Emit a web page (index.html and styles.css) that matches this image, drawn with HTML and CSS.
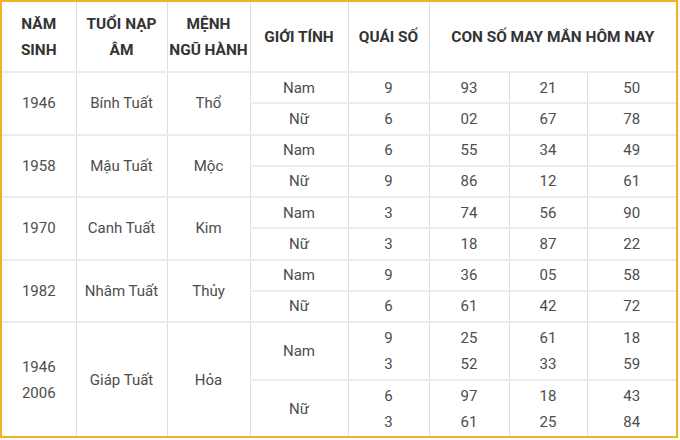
FILE: index.html
```html
<!DOCTYPE html>
<html lang="vi">
<head>
<meta charset="utf-8">
<link rel="stylesheet" href="styles.css">
</head>
<body>
<div class="frame">
<table class="lucky">
<colgroup>
<col class="c1"><col class="c2"><col class="c3"><col class="c4"><col class="c5"><col class="c6"><col class="c7"><col class="c8">
</colgroup>
<thead>
<tr class="head">
<th>NĂM<br>SINH</th>
<th>TUỔI NẠP<br>ÂM</th>
<th>MỆNH<br>NGŨ HÀNH</th>
<th>GIỚI TÍNH</th>
<th>QUÁI SỐ</th>
<th colspan="3">CON SỐ MAY MẮN HÔM NAY</th>
</tr>
</thead>
<tbody>
<tr class="r"><td rowspan="2">1946</td><td rowspan="2">Bính Tuất</td><td rowspan="2">Thổ</td><td>Nam</td><td>9</td><td>93</td><td>21</td><td>50</td></tr>
<tr class="r"><td>Nữ</td><td>6</td><td>02</td><td>67</td><td>78</td></tr>
<tr class="r"><td rowspan="2">1958</td><td rowspan="2">Mậu Tuất</td><td rowspan="2">Mộc</td><td>Nam</td><td>6</td><td>55</td><td>34</td><td>49</td></tr>
<tr class="r"><td>Nữ</td><td>9</td><td>86</td><td>12</td><td>61</td></tr>
<tr class="r"><td rowspan="2" class="shl">1970</td><td rowspan="2">Canh Tuất</td><td rowspan="2" class="shr">Kim</td><td>Nam</td><td>3</td><td>74</td><td>56</td><td>90</td></tr>
<tr class="r"><td>Nữ</td><td>3</td><td>18</td><td>87</td><td>22</td></tr>
<tr class="r"><td rowspan="2">1982</td><td rowspan="2">Nhâm Tuất</td><td rowspan="2">Thủy</td><td>Nam</td><td>9</td><td>36</td><td>05</td><td>58</td></tr>
<tr class="r"><td>Nữ</td><td>6</td><td>61</td><td>42</td><td>72</td></tr>
<tr class="rb1"><td rowspan="2" class="two">1946<br>2006</td><td rowspan="2">Giáp Tuất</td><td rowspan="2">Hỏa</td><td>Nam</td><td class="two">9<br>3</td><td class="two">25<br>52</td><td class="two">61<br>33</td><td class="two">18<br>59</td></tr>
<tr class="rb2"><td>Nữ</td><td class="two">6<br>3</td><td class="two">97<br>61</td><td class="two">18<br>25</td><td class="two">43<br>84</td></tr>
</tbody>
</table>
</div>
</body>
</html>
```
FILE: styles.css
```css
html, body {
  margin: 0;
  padding: 0;
  background: #fafafa;
}
.frame {
  width: 674px;
  height: 434px;
  border: 2px solid #f2b227;
  background: #ffffff;
  overflow: hidden;
}
.lucky {
  width: 674px;
  border-collapse: collapse;
  table-layout: fixed;
  font-family: Roboto, "Liberation Sans", Arial, sans-serif;
  font-size: 15px;
  color: #4d4d4d;
}
.c1 { width: 74px; }
.c2 { width: 91px; }
.c3 { width: 83px; }
.c4 { width: 98px; }
.c5 { width: 81px; }
.c6 { width: 80px; }
.c7 { width: 78px; }
.c8 { width: 89px; }
.lucky th, .lucky td {
  border-left: 1px solid #dedede;
  border-right: 1px solid #dedede;
  border-top: 2px solid #ececec;
  border-bottom: 2px solid #ececec;
  text-align: center;
  vertical-align: middle;
  padding: 0;
}
.lucky tr > :first-child { border-left: none; }
.lucky tr > :last-child { border-right: none; }
.lucky thead th {
  border-top: none;
  font-weight: 700;
  font-size: 15.4px;
  color: #333333;
  line-height: 26px;
  height: 69px;
}
.lucky tbody tr:last-child td { border-bottom: none; }
.r td { height: 29.25px; line-height: 18px; }
.rb1 td { height: 56px; }
.rb2 td { height: 56px; }
.two { line-height: 26px; }
.shl { padding-right: 6px; }
.shr { padding-left: 8px; }
```
